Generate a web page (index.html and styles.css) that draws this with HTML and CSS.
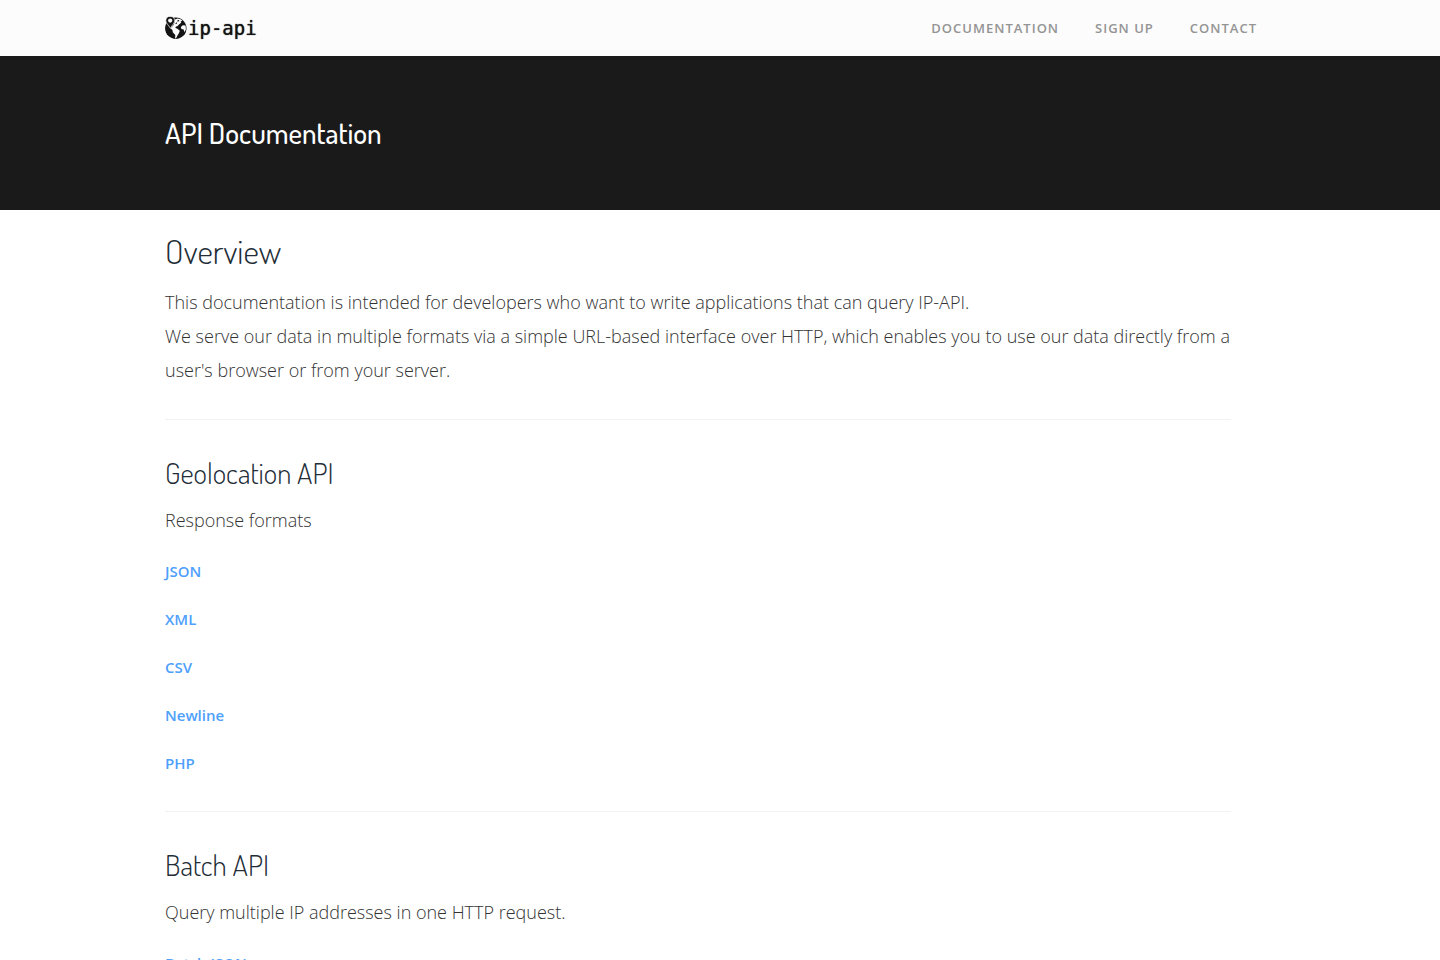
FILE: index.html
```
<!DOCTYPE html>
<html lang="en">
<head>
    <meta charset="UTF-8">
    <meta name="viewport" content="width=device-width, initial-scale=1.0">
    <title>IP-API.com - API Documentation</title>
    <link rel="stylesheet" href="styles.css">
</head>
<body>
    <header class="navbar">
        <div class="container navbar-inner">
            <a href="#" class="logo">
                <svg class="logo-globe" viewBox="0 0 22 24" aria-hidden="true">
                    <circle cx="10.8" cy="12.3" r="10.7" fill="#141414"/>
                    <!-- land -->
                    <path fill="#fcfcfc" d="M10 3.6l2.6-1.2 3 .8 1.8 1.6-1.8.6.6 1.3-2 1.6-1.6 1.6-1.8.8-.4 1.2 2 .8 2.4 2-.8 2.4-1.8 2.8-1.2 2.6-.9-.2.2-3.2-2.5-2.8-.4-2.2-2-1.9 1.6-1.4 2-2.6z"/>
                    <path fill="#fcfcfc" d="M20.6 9.6l-2.8-.4-1.9 1.7.5 2.2 2.3.5.6 2.6 1.6-2.8z"/>
                    <path fill="#141414" d="M12.2 4.6l1.6-.6.6.9-1.7.9zM10.4 7.2l1.5-.9.3 1-1.3.9z"/>
                    <!-- pin -->
                    <path fill="#141414" stroke="#fcfcfc" stroke-width=".7" d="M5.2.4a4.4 4.4 0 0 1 4.4 4.3c0 2.6-2.4 4.2-4.2 7.6C3.6 9 .8 7.3.8 4.7A4.4 4.4 0 0 1 5.2.4z"/>
                    <circle cx="5.2" cy="4.6" r="2.1" fill="#fcfcfc"/>
                </svg>
                <span>ip-api</span>
            </a>
            <nav class="nav">
                <a href="#">Documentation</a>
                <a href="#">Sign up</a>
                <a href="#">Contact</a>
            </nav>
        </div>
    </header>

    <div class="page-title">
        <div class="container">
            <h1>API Documentation</h1>
        </div>
    </div>

    <main class="container">
        <div class="content">
            <section>
                <h2>Overview</h2>
                <p>This documentation is intended for developers who want to write applications that can query IP-API.<br>
                We serve our data in multiple formats via a simple URL-based interface over HTTP, which enables you to use our data directly from a user's browser or from your server.</p>
            </section>

            <section class="api">
                <h3>Geolocation API</h3>
                <p>Response formats</p>
                <ul>
                    <li><a href="#">JSON</a></li>
                    <li><a href="#">XML</a></li>
                    <li><a href="#">CSV</a></li>
                    <li><a href="#">Newline</a></li>
                    <li><a href="#">PHP</a></li>
                </ul>
            </section>

            <section class="api">
                <h3>Batch API</h3>
                <p>Query multiple IP addresses in one HTTP request.</p>
                <ul>
                    <li><a href="#">Batch JSON</a></li>
                </ul>
            </section>
        </div>
    </main>
</body>
</html>
```
FILE: styles.css
```
* {
    box-sizing: border-box;
    margin: 0;
    padding: 0;
}

html {
    scrollbar-width: none;
}

body {
    font-family: 'Open Sans', sans-serif;
    font-size: 18px;
    font-weight: 300;
    line-height: 34px;
    color: #333;
    background: #fff;
}

a {
    color: #4f9ffc;
    text-decoration: none;
}

.container {
    width: 100%;
    max-width: 1140px;
    margin: 0 auto;
    padding: 0 15px;
}

/* Header */
.navbar {
    background: #fcfcfc;
}

.navbar-inner {
    display: flex;
    align-items: center;
    justify-content: space-between;
    min-height: 56px;
}

.logo {
    display: flex;
    align-items: center;
    gap: 1px;
    font-family: 'DejaVu Sans Mono', monospace;
    font-size: 19px;
    font-weight: 400;
    color: #141414;
    text-shadow: 0 0 1px #141414;
}

.logo-globe {
    width: 22px;
    height: 24px;
}

.nav {
    display: flex;
}

.nav a {
    padding: 0 18px;
    font-size: 13px;
    font-weight: 600;
    letter-spacing: 1px;
    text-transform: uppercase;
    color: #949494;
}

.nav a:hover {
    color: #333;
}

/* Title band */
.page-title {
    padding: 60px 0;
    background: #1a1a1a;
}

h1,
h2,
h3 {
    font-family: 'Dosis', 'Liberation Sans Narrow', 'Open Sans', sans-serif;
    font-weight: 300;
    color: #232d37;
}

h1 {
    font-size: 29px;
    font-weight: 500;
    line-height: 34px;
    color: #fff;
}

/* Content */
.content {
    width: 96%;
    padding-top: 17px;
}

h2 {
    margin-bottom: 10px;
    font-size: 34px;
    line-height: 48px;
}

h3 {
    margin-bottom: 6px;
    font-size: 29px;
    line-height: 48px;
}

.api {
    margin-top: 32px;
    padding-top: 29px;
    border-top: 1px solid #f2f2f2;
}

.api + .api {
    margin-top: 24px;
}

ul {
    margin-top: 10px;
    list-style: none;
}

li {
    font-size: 15px;
    font-weight: 600;
    line-height: 48px;
}
```
